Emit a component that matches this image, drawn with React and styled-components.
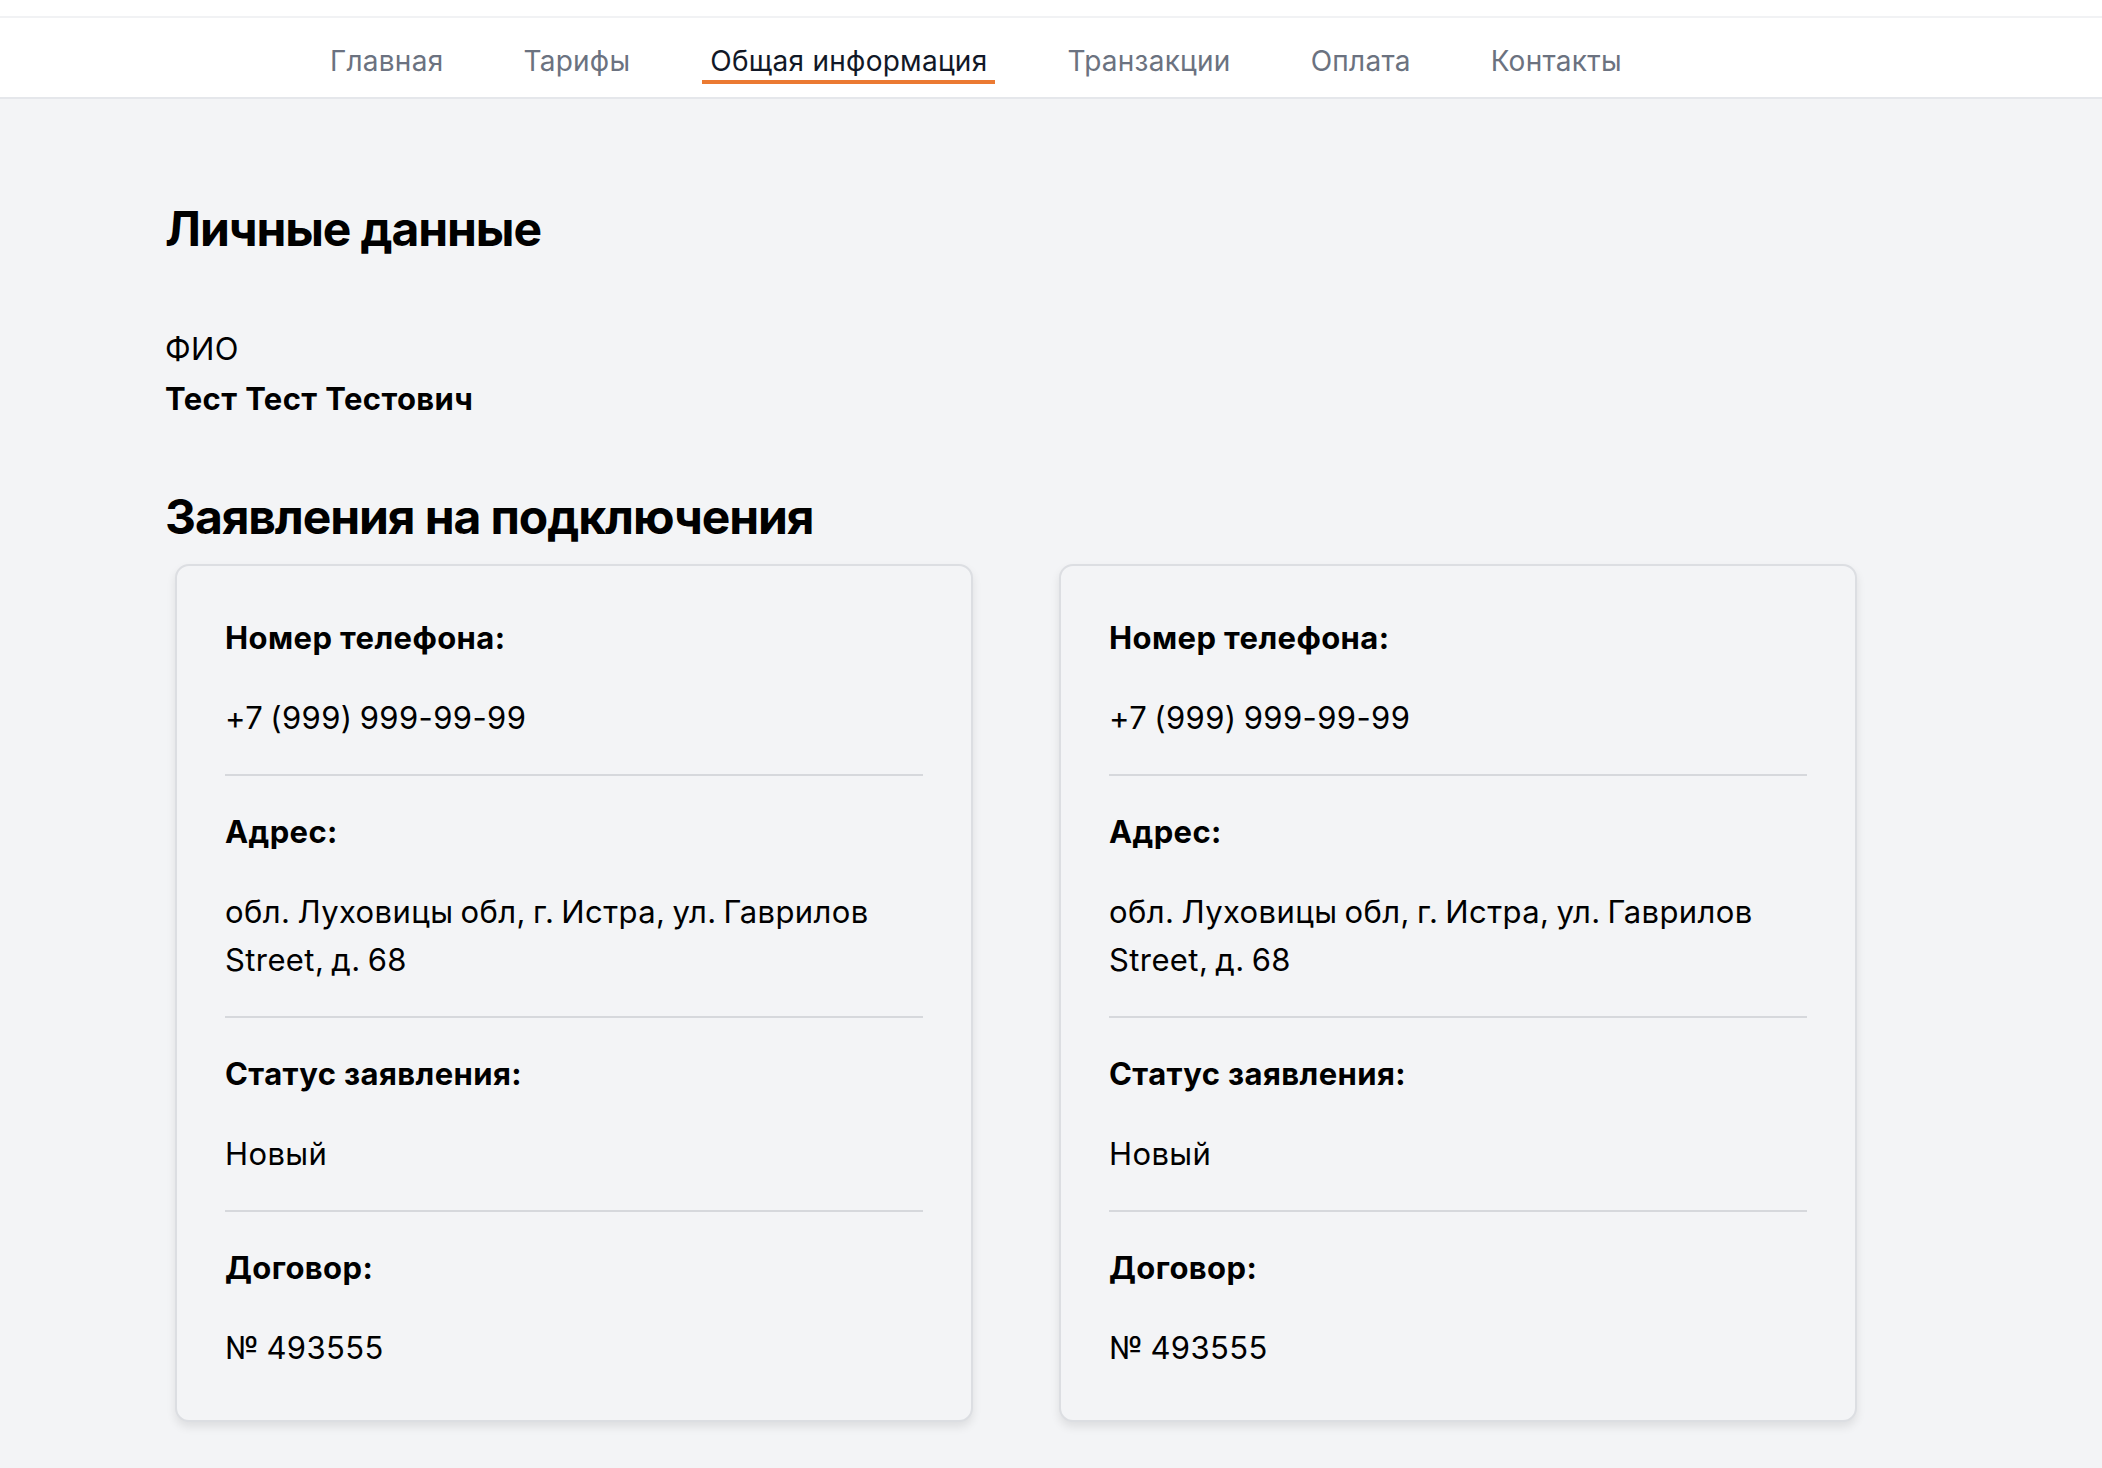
import React from 'react'
import styled, { createGlobalStyle } from 'styled-components'

const GlobalStyle = createGlobalStyle`
  * {
    box-sizing: border-box;
  }

  body {
    margin: 0;
    background-color: #f3f4f6;
    font-family: Inter, "Noto Sans", "Liberation Sans", sans-serif;
    color: #000;
  }
`

const StyledPage = styled.div`
  min-height: 100vh;
  background-color: #f3f4f6;
`

const StyledTopStrip = styled.div`
  height: 18px;
  background-color: #fff;
  border-bottom: 2px solid #f1f2f4;
`

const StyledNav = styled.nav`
  display: flex;
  gap: 64px;
  padding: 26px 0 13px 322px;
  background-color: #fff;
  border-bottom: 2px solid #e5e7eb;
`

const StyledNavLink = styled.a`
  display: block;
  padding: 0 8px 2px;
  font-size: 28px;
  line-height: 34px;
  letter-spacing: 0.25px;
  color: ${({ $active }) => ($active ? '#111827' : '#6b7280')};
  border-bottom: 4px solid ${({ $active }) => ($active ? '#eb7a32' : 'transparent')};
  text-decoration: none;
  cursor: pointer;
`

const StyledMain = styled.main`
  padding: 101px 0 40px 165px;
`

const StyledTitle = styled.h2`
  margin: 0 0 ${({ $gap }) => $gap}px;
  font-size: 48px;
  line-height: 58px;
  font-weight: 700;
  letter-spacing: -1.1px;
`

const StyledPerson = styled.div`
  margin-bottom: 64px;
  font-size: 31px;
  line-height: 50px;
  letter-spacing: 0.4px;

  strong {
    display: block;
    font-weight: 700;
  }
`

const StyledCards = styled.div`
  display: grid;
  grid-template-columns: repeat(2, 798px);
  column-gap: 86px;
  padding: 0 10px;
`

const StyledCard = styled.div`
  padding: 48px;
  border: 2px solid #dcdee2;
  border-radius: 14px;
  background-color: #f3f4f6;
  box-shadow: 0 5px 10px rgba(0, 0, 0, 0.09);
`

const StyledField = styled.div`
  padding: 32px 0;
  border-bottom: 2px solid #d6d8dc;

  &:first-child {
    padding-top: 0;
  }

  &:last-child {
    padding-bottom: 0;
    border-bottom: none;
  }
`

const StyledLabel = styled.div`
  margin-bottom: 32px;
  font-size: 31px;
  line-height: 48px;
  font-weight: 700;
  letter-spacing: 0.4px;
`

const StyledValue = styled.div`
  font-size: 31px;
  line-height: 48px;
  letter-spacing: 0.4px;
  word-spacing: -2px;
`

const navItems = ['Главная', 'Тарифы', 'Общая информация', 'Транзакции', 'Оплата', 'Контакты']

const applications = [
  {
    id: 1,
    phone: '+7 (999) 999-99-99',
    address: 'обл. Луховицы обл, г. Истра, ул. Гаврилов Street, д. 68',
    status: 'Новый',
    contract: '№ 493555',
  },
  {
    id: 2,
    phone: '+7 (999) 999-99-99',
    address: 'обл. Луховицы обл, г. Истра, ул. Гаврилов Street, д. 68',
    status: 'Новый',
    contract: '№ 493555',
  },
]

function ApplicationCard({ item }) {
  const fields = [
    ['Номер телефона:', item.phone],
    ['Адрес:', item.address],
    ['Статус заявления:', item.status],
    ['Договор:', item.contract],
  ]

  return (
    <StyledCard>
      {fields.map(([label, value]) => (
        <StyledField key={label}>
          <StyledLabel>{label}</StyledLabel>
          <StyledValue>{value}</StyledValue>
        </StyledField>
      ))}
    </StyledCard>
  )
}

function App() {
  return (
    <StyledPage>
      <GlobalStyle />
      <StyledTopStrip />
      <StyledNav>
        {navItems.map((name) => (
          <StyledNavLink key={name} $active={name === 'Общая информация'}>
            {name}
          </StyledNavLink>
        ))}
      </StyledNav>
      <StyledMain>
        <StyledTitle $gap={66}>Личные данные</StyledTitle>
        <StyledPerson>
          ФИО
          <strong>Тест Тест Тестович</strong>
        </StyledPerson>
        <StyledTitle $gap={18}>Заявления на подключения</StyledTitle>
        <StyledCards>
          {applications.map((item) => (
            <ApplicationCard key={item.id} item={item} />
          ))}
        </StyledCards>
      </StyledMain>
    </StyledPage>
  )
}

export default App
